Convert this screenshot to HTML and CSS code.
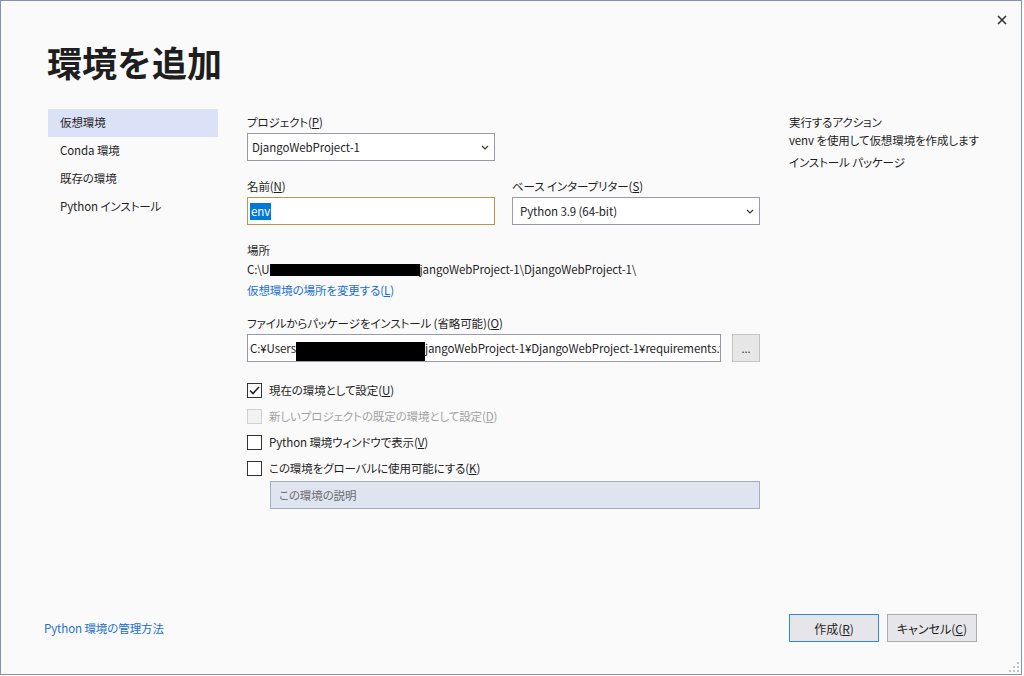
FILE: index.html
```html
<!DOCTYPE html>
<html lang="ja">
<head>
    <meta charset="UTF-8">
    <title>環境を追加</title>
    <link rel="stylesheet" href="styles.css">
</head>
<body>
    <div class="dialog">
        <button class="close-btn" type="button" aria-label="閉じる">
            <svg width="10" height="10" viewBox="0 0 10 10"><path d="M1 1L9 9M9 1L1 9" stroke="#333" stroke-width="1.6"/></svg>
        </button>

        <h1 class="dialog-title">環境を追加</h1>

        <div class="dialog-body">
            <ul class="env-nav">
                <li class="active">仮想環境</li>
                <li>Conda 環境</li>
                <li>既存の環境</li>
                <li>Python インストール</li>
            </ul>

            <form class="env-form">
                <div class="field first">
                    <label>プロジェクト(<u>P</u>)</label>
                    <div class="select half">
                        <span>DjangoWebProject-1</span>
                        <svg width="8" height="5" viewBox="0 0 8 5"><path d="M1 1L4 4L7 1" fill="none" stroke="#333" stroke-width="1.2"/></svg>
                    </div>
                </div>

                <div class="field-row">
                    <div class="field">
                        <label>名前(<u>N</u>)</label>
                        <div class="textbox focused"><span class="sel-text">env</span></div>
                    </div>
                    <div class="field">
                        <label>ベース インタープリター(<u>S</u>)</label>
                        <div class="select roomy">
                            <span>Python 3.9 (64-bit)</span>
                            <svg width="8" height="5" viewBox="0 0 8 5"><path d="M1 1L4 4L7 1" fill="none" stroke="#333" stroke-width="1.2"/></svg>
                        </div>
                    </div>
                </div>

                <div class="field location">
                    <label>場所</label>
                    <div class="path">C:\U<span class="redact"></span>jangoWebProject-1\DjangoWebProject-1\</div>
                    <a class="link" href="#">仮想環境の場所を変更する(<u>L</u>)</a>
                </div>

                <div class="field">
                    <label>ファイルからパッケージをインストール (省略可能)(<u>O</u>)</label>
                    <div class="file-row">
                        <div class="textbox file">C:¥Users<span class="redact tall"></span>jangoWebProject-1¥DjangoWebProject-1¥requirements.txt</div>
                        <button class="browse" type="button">...</button>
                    </div>
                </div>

                <div class="checks">
                    <div class="check"><span class="box"><svg width="11" height="9" viewBox="0 0 11 9"><path d="M1 4.5L4 7.5L10 1" fill="none" stroke="#222" stroke-width="1.6"/></svg></span><span>現在の環境として設定(<u>U</u>)</span></div>
                    <div class="check disabled"><span class="box"></span><span>新しいプロジェクトの既定の環境として設定(<u>D</u>)</span></div>
                    <div class="check"><span class="box"></span><span>Python 環境ウィンドウで表示(<u>V</u>)</span></div>
                    <div class="check"><span class="box"></span><span>この環境をグローバルに使用可能にする(<u>K</u>)</span></div>
                </div>

                <div class="textbox desc">この環境の説明</div>
            </form>

            <div class="actions">
                <div>実行するアクション</div>
                <div>venv を使用して仮想環境を作成します</div>
                <div class="spaced">インストール パッケージ</div>
            </div>
        </div>

        <div class="dialog-footer">
            <a class="link" href="#">Python 環境の管理方法</a>
            <div class="buttons">
                <button class="btn primary" type="button">作成(<u>R</u>)</button>
                <button class="btn" type="button">キャンセル(<u>C</u>)</button>
            </div>
        </div>

        <svg class="grip" width="10" height="10" viewBox="0 0 10 10">
            <rect x="8" y="0" width="2" height="2" fill="#c4c4c4"/>
            <rect x="4" y="4" width="2" height="2" fill="#c4c4c4"/>
            <rect x="8" y="4" width="2" height="2" fill="#c4c4c4"/>
            <rect x="0" y="8" width="2" height="2" fill="#c4c4c4"/>
            <rect x="4" y="8" width="2" height="2" fill="#c4c4c4"/>
            <rect x="8" y="8" width="2" height="2" fill="#c4c4c4"/>
        </svg>
    </div>
</body>
</html>
```

FILE: styles.css
```css
/* 全体 */
body {
    margin: 0;
    background: #ffffff;
    font-family: "Noto Sans CJK JP", "Noto Sans", sans-serif;
    font-size: 11.5px;
    letter-spacing: -0.1px;
    color: #1e1e1e;
    font-feature-settings: "palt" 1;
}

u {
    text-decoration: underline;
    text-underline-offset: 1px;
}

/* ダイアログ枠 */
.dialog {
    position: relative;
    box-sizing: border-box;
    width: 1022px;
    height: 675px;
    border: 1px solid #8592ad;
    background: #fafafa;
    display: flex;
    flex-direction: column;
}

.close-btn {
    position: absolute;
    top: 13px;
    right: 13px;
    width: 12px;
    height: 12px;
    padding: 0;
    border: none;
    background: none;
    display: flex;
    align-items: center;
    justify-content: center;
}

.dialog-title {
    margin: 0 0 28px 0;
    padding: 42px 0 0 46px;
    font-size: 35px;
    line-height: 38px;
    font-weight: 700;
    letter-spacing: 0;
    color: #1e1e1e;
    font-feature-settings: normal;
}

/* 本体：3列 */
.dialog-body {
    flex: 1;
    display: grid;
    grid-template-columns: 170px 513px 1fr;
    column-gap: 29px;
    padding-left: 47px;
    align-items: start;
}

/* 左ナビ */
.env-nav {
    list-style: none;
    margin: 0;
    padding: 0;
}

.env-nav li {
    height: 28px;
    line-height: 27px;
    padding-left: 12px;
}

.env-nav li.active {
    background: #dbe1f6;
}

/* フォーム */
.field label {
    display: block;
    line-height: 16px;
    margin-bottom: 3px;
}

.field.first {
    margin-top: 5px;
}

.field-row {
    display: grid;
    grid-template-columns: 248px 248px;
    column-gap: 17px;
    margin-top: 17px;
}

.location,
.location + .field {
    margin-top: 17px;
}

.select,
.textbox {
    box-sizing: border-box;
    height: 28px;
    border: 1px solid #9a9ba6;
    background: #ffffff;
    display: flex;
    align-items: center;
    white-space: nowrap;
    overflow: hidden;
}

.select {
    justify-content: space-between;
    padding: 0 5px 0 4px;
}

.select.half {
    width: 248px;
}

.select.roomy {
    padding-left: 7px;
}

.textbox {
    padding-left: 2px;
}

.textbox.focused {
    border-color: #b89550;
}

.sel-text {
    background: #0078d7;
    color: #ffffff;
    padding: 0 1px;
    line-height: 17px;
}

.path {
    line-height: 16px;
    margin-top: 3px;
    white-space: nowrap;
}

.redact {
    display: inline-block;
    width: 150px;
    height: 12px;
    background: #000000;
    vertical-align: -2px;
}

.redact.tall {
    width: 129px;
    height: 21px;
    vertical-align: -10px;
}

.link {
    display: block;
    margin-top: 5px;
    line-height: 16px;
    color: #1a6fce;
    text-decoration: none;
}

.file-row {
    display: flex;
    gap: 11px;
}

.textbox.file {
    display: block;
    width: 475px;
    line-height: 26px;
}

.browse {
    width: 28px;
    height: 28px;
    padding: 0;
    border: 1px solid #c4c4c4;
    background: #e6e6e6;
    font-family: inherit;
    font-size: 11px;
    color: #333;
}

/* チェックボックス */
.checks {
    margin-top: 15px;
}

.check {
    height: 26px;
    display: flex;
    align-items: center;
    gap: 7px;
}

.check .box {
    box-sizing: border-box;
    flex-shrink: 0;
    width: 15px;
    height: 15px;
    border: 1px solid #333333;
    background: #ffffff;
    display: flex;
    align-items: center;
    justify-content: center;
}

.check.disabled {
    color: #a2a2a2;
}

.check.disabled .box {
    border-color: #d0d0d0;
    background: #f2f2f2;
}

.textbox.desc {
    margin-left: 23px;
    width: 490px;
    padding-left: 8px;
    background: #dee5f0;
    border-color: #a5afbd;
    color: #6b6b6b;
}

/* 右列 */
.actions {
    margin-top: 4px;
    line-height: 18px;
}

.actions .spaced {
    margin-top: 4px;
}

/* フッター */
.dialog-footer {
    display: flex;
    justify-content: space-between;
    align-items: center;
    padding: 0 44px 32px 43px;
}

.dialog-footer .link {
    margin-top: 0;
}

.buttons {
    display: flex;
    gap: 8px;
}

.btn {
    width: 90px;
    height: 28px;
    border: 1px solid #adadad;
    background: #e6e6ea;
    font-family: inherit;
    font-size: 12px;
    color: #1e1e1e;
    font-feature-settings: "palt" 1;
}

.btn.primary {
    border-color: #2a8ae0;
}

.grip {
    position: absolute;
    right: 2px;
    bottom: 2px;
}
```
